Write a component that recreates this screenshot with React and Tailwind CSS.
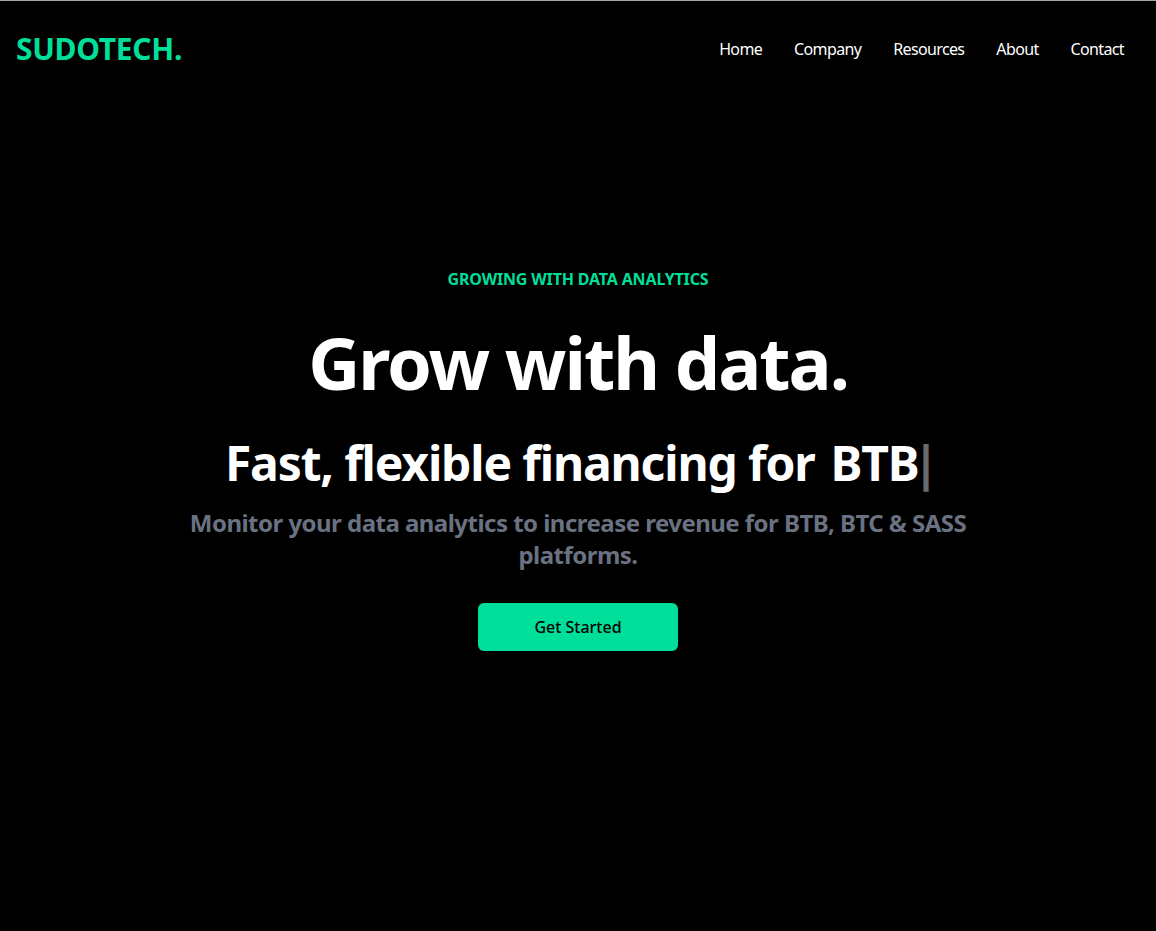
const links = ['Home', 'Company', 'Resources', 'About', 'Contact'];

function Navbar() {
  return (
    <div className="flex justify-between items-center h-24 max-w-[1240px] mx-auto px-4 text-white">
      <h1 className="w-full text-3xl font-bold text-[#00df9a] tracking-[-0.01em]">SUDOTECH.</h1>
      <ul className="flex">
        {links.map((l) => (
          <li key={l} className="p-4 whitespace-nowrap tracking-[-0.04em]">
            {l}
          </li>
        ))}
      </ul>
    </div>
  );
}

function Hero() {
  return (
    <div className="text-white">
      <div className="max-w-[800px] mt-[-96px] w-full h-screen mx-auto text-center flex flex-col justify-center">
        <p className="text-[#00df9a] font-bold p-2 tracking-[-0.01em]">GROWING WITH DATA ANALYTICS</p>
        <h1 className="text-7xl font-bold pt-[27px] pb-[21px] tracking-[-0.028em]">Grow with data.</h1>
        <div className="flex justify-center items-center pt-5 pb-3">
          <p className="text-5xl font-bold tracking-[-0.024em]">Fast, flexible financing for</p>
          <span className="text-5xl font-bold pl-4 tracking-[-0.024em]">BTB</span>
          <span className="text-5xl font-bold text-[#6b6b6b] ml-[-6px] mr-[-8px]">|</span>
        </div>
        <p className="text-2xl font-bold text-gray-500 mt-2 tracking-[-0.022em]">
          Monitor your data analytics to increase revenue for BTB, BTC &amp; SASS platforms.
        </p>
        <button className="bg-[#00df9a] w-[200px] rounded-md font-medium mt-8 mb-6 mx-auto py-3 text-black">
          Get Started
        </button>
      </div>
    </div>
  );
}

export default function App() {
  return (
    <div className="bg-black h-screen overflow-hidden border-t border-[#a3a3a3] font-['Noto_Sans',sans-serif]">
      <Navbar />
      <Hero />
    </div>
  );
}
